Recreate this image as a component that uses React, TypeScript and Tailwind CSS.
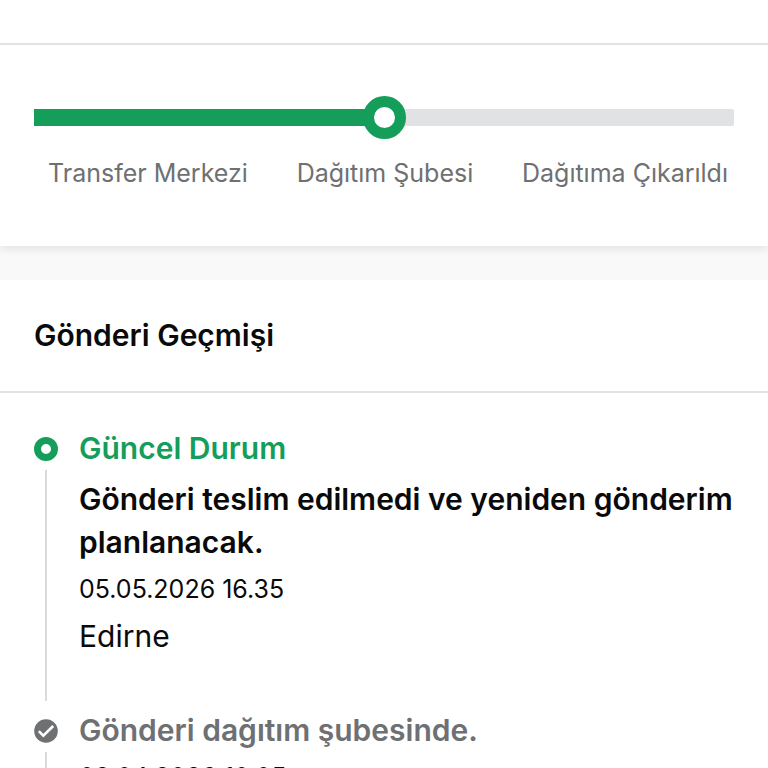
import clsx from 'clsx';

interface HistoryItem {
  title: string;
  description?: string;
  date: string;
  place: string;
  current?: boolean;
}

const steps = ['Transfer Merkezi', 'Dağıtım Şubesi', 'Dağıtıma Çıkarıldı'];

const history: HistoryItem[] = [
  {
    title: 'Güncel Durum',
    description: 'Gönderi teslim edilmedi ve yeniden gönderim planlanacak.',
    date: '05.05.2026 16.35',
    place: 'Edirne',
    current: true,
  },
  {
    title: 'Gönderi dağıtım şubesinde.',
    date: '02.04.2026 10.05',
    place: 'Edirne',
  },
];

function ProgressTrack() {
  return (
    <div className="flex items-center">
      <div className="h-[17px] flex-1 bg-[#149e5a]" />
      <div className="z-10 -mx-1 size-[43px] shrink-0 rounded-full border-[11px] border-[#149e5a] bg-white" />
      <div className="h-[17px] flex-1 rounded-r-xs bg-[#e1e2e4]" />
    </div>
  );
}

function StatusIcon({ current }: { current?: boolean }) {
  if (current) {
    return <span className="size-6 shrink-0 rounded-full border-[7px] border-[#149e5a] bg-white" />;
  }
  return (
    <svg viewBox="0 0 24 24" className="size-6 shrink-0" aria-hidden="true">
      <circle cx="12" cy="12" r="11.8" fill="#6e7072" />
      <path d="M4.8 12.1l4.5 4.5L19.2 7" fill="none" stroke="#fff" strokeWidth="2.6" />
    </svg>
  );
}

function HistoryRow({ item }: { item: HistoryItem }) {
  return (
    <li className="flex gap-[21px]">
      <div className="flex flex-col items-center">
        <div className="flex h-[43px] items-center">
          <StatusIcon current={item.current} />
        </div>
        <div className="mb-2 w-[2px] flex-1 bg-[#d9dadb]" />
      </div>
      <div className="min-w-0 flex-1 pb-[51px]">
        <h3
          className={clsx(
            'mb-2 text-[30px] leading-[43px] font-semibold',
            item.current ? 'text-[#149e5a]' : 'text-[#6e7072]'
          )}
        >
          {item.title}
        </h3>
        {item.description && (
          <p className="mb-2 text-[30px] leading-[43px] font-semibold">{item.description}</p>
        )}
        <p className="mb-2 text-[25px] leading-[35px]">{item.date}</p>
        <p className="text-[30px] leading-[43px]">{item.place}</p>
      </div>
    </li>
  );
}

export default function App() {
  return (
    <main className="h-screen overflow-hidden bg-[#f9f9f9] font-['Inter',sans-serif] text-[#0a0a0a]">
      <section className="bg-white shadow-[0_4px_8px_rgba(0,0,0,0.08)]">
        <div className="h-[45px] border-b-2 border-[#e1e2e3]" />
        <div className="px-[34px] pt-[51px] pb-[55px]">
          <ProgressTrack />
          <ol className="mt-4 flex justify-between pr-[6px] pl-[14px] text-[25px] leading-9 text-[#6e7072]">
            {steps.map((step) => (
              <li key={step} className="whitespace-nowrap">
                {step}
              </li>
            ))}
          </ol>
        </div>
      </section>

      <section className="mt-[34px] bg-white">
        <h2 className="border-b-2 border-[#e1e2e3] px-[34px] py-[34px] text-[30px] leading-[43px] font-semibold">
          Gönderi Geçmişi
        </h2>
        <ul className="px-[34px] pt-[34px]">
          {history.map((item) => (
            <HistoryRow key={item.title} item={item} />
          ))}
        </ul>
      </section>
    </main>
  );
}
